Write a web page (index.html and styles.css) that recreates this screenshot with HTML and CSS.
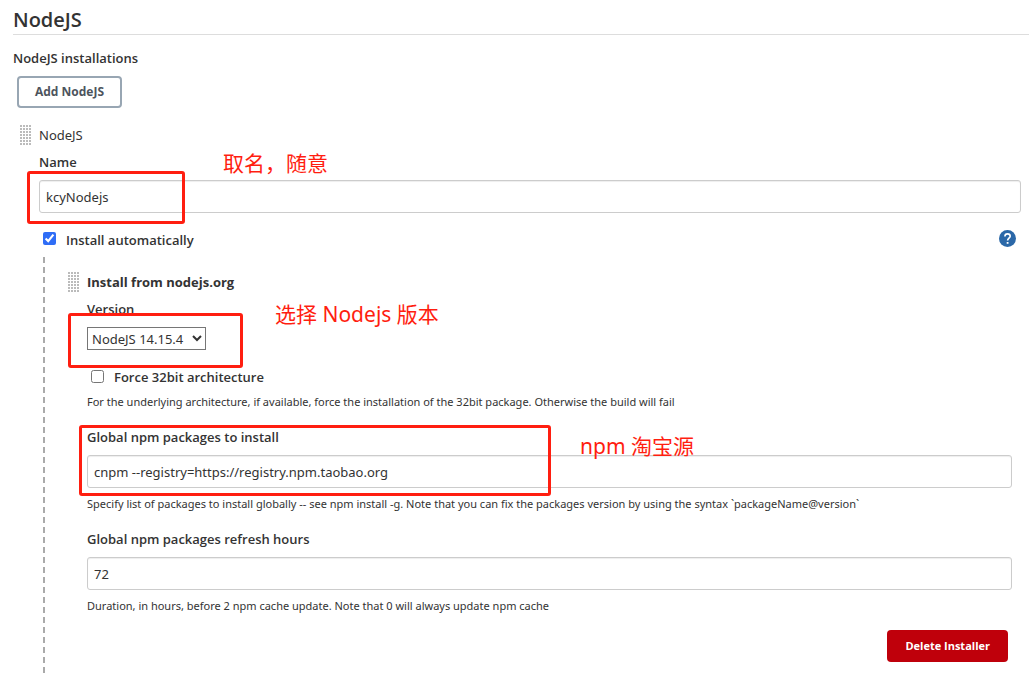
FILE: index.html
```
<!DOCTYPE html>
<html lang="en">
<head>
<meta charset="utf-8">
<title>NodeJS</title>
<link rel="stylesheet" href="styles.css">
</head>
<body>
<main class="page">
  <h1 class="page-title">NodeJS</h1>
  <h2 class="section-title">NodeJS installations</h2>
  <button type="button" class="btn btn-outline">Add NodeJS</button>

  <section class="tool">
    <div class="drag-row">
      <span class="drag-handle"></span>
      <span>NodeJS</span>
    </div>
    <div class="tool-body">
      <div class="field">
        <label class="label" for="name">Name</label>
        <input class="text-input" id="name" type="text" value="kcyNodejs">
        <span class="mark mark-name"></span>
        <span class="note note-name" lang="zh">取名，随意</span>
      </div>
      <div class="check-row">
        <input class="check" id="auto" type="checkbox" checked>
        <label class="label" for="auto">Install automatically</label>
        <button type="button" class="help" aria-label="Help">
          <svg viewBox="0 0 17 17" width="17" height="17" aria-hidden="true">
            <circle cx="8.500" cy="8.500" r="8.500" fill="#2b68a8"/>
            <path d="M5.900 6.500C5.900 4.700 7 3.900 8.500 3.900S11.200 4.800 11.200 6.300C11.200 8.100 8.600 8.400 8.600 10.500" fill="none" stroke="#fff" stroke-width="1.600"/>
            <rect x="7.700" y="12" width="1.800" height="1.800" fill="#fff"/>
          </svg>
        </button>
      </div>
    </div>
  </section>

  <section class="installer">
    <div class="drag-row strong">
      <span class="drag-handle"></span>
      <span>Install from nodejs.org</span>
    </div>
    <div class="installer-body">
      <div class="field field-version">
        <label class="label" for="version">Version</label>
        <select class="select" id="version"><option>NodeJS 14.15.4</option></select>
        <span class="mark mark-version"></span>
        <span class="note note-version" lang="zh">选择 Nodejs 版本</span>
      </div>
      <div class="check-row">
        <input class="check" id="force" type="checkbox">
        <label class="label" for="force">Force 32bit architecture</label>
      </div>
      <p class="hint">For the underlying architecture, if available, force the installation of the 32bit package. Otherwise the build will fail</p>
      <div class="field field-packages">
        <label class="label" for="packages">Global npm packages to install</label>
        <input class="text-input" id="packages" type="text" value="cnpm --registry=https://registry.npm.taobao.org">
        <span class="mark mark-packages"></span>
        <span class="note note-packages" lang="zh">npm 淘宝源</span>
      </div>
      <p class="hint">Specify list of packages to install globally -- see npm install -g. Note that you can fix the packages version by using the syntax `packageName@version`</p>
      <div class="field field-hours">
        <label class="label" for="hours">Global npm packages refresh hours</label>
        <input class="text-input" id="hours" type="text" value="72">
      </div>
      <p class="hint">Duration, in hours, before 2 npm cache update. Note that 0 will always update npm cache</p>
      <div class="actions">
        <button type="button" class="btn btn-danger">Delete Installer</button>
      </div>
    </div>
  </section>
</main>
</body>
</html>
```
FILE: styles.css
```
* {
  box-sizing: border-box;
}

body {
  margin: 0;
  background: #fff;
  color: #333;
  font: 13px/20px "Noto Sans", "Noto Sans CJK SC", sans-serif;
}

.page {
  padding: 6px 3px 0 13px;
}

.page-title,
.section-title,
.label,
.strong {
  font-family: "Open Sans", sans-serif;
  font-weight: 600;
}

.page-title {
  margin: 0;
  border-bottom: 1px solid #ddd;
  font-size: 20px;
  line-height: 28px;
}

.section-title {
  margin: 13px 0 8px;
  font-size: 13px;
  line-height: 20px;
}

.btn {
  height: 32px;
  padding: 0 16px;
  border-radius: 4px;
  font: 700 12px/16px "Open Sans", sans-serif;
  cursor: pointer;
}

.btn-outline {
  display: block;
  margin-left: 4px;
  border: 2px solid #98a6b3;
  background: #fff;
  color: #4d545d;
}

.btn-danger {
  padding: 0 18px;
  border: 0;
  background: #bf000b;
  color: #fff;
  font-size: 11px;
}

.tool {
  margin: 17px 8px 0 7px;
}

.drag-row {
  display: flex;
  align-items: center;
  gap: 8px;
}

.strong {
  font-weight: 700;
}

.drag-handle {
  width: 11px;
  height: 20px;
  background: radial-gradient(circle at 1px 1px, #bbb 1px, transparent 1px) 0 0 / 3px 3px;
}

.tool-body,
.installer-body {
  padding-left: 19px;
}

.field {
  position: relative;
  display: flex;
  flex-direction: column;
  align-items: flex-start;
}

.tool .field {
  padding-top: 7px;
}

.text-input {
  width: 100%;
  height: 33px;
  margin-top: 8px;
  padding: 0 6px;
  border: 1px solid #ccc;
  border-radius: 3px;
  background: #fff;
  box-shadow: inset 0 1px 1px #eee;
  color: #333;
  font: inherit;
}

.check-row {
  display: flex;
  align-items: flex-start;
  gap: 10px;
  padding-left: 4px;
}

.tool .check-row {
  margin-top: 17px;
}

.check {
  width: 13px;
  height: 13px;
  margin: 3px 0 0;
  accent-color: #2f6df6;
}

.tool .check {
  margin-top: 2px;
}

.help {
  display: flex;
  margin: 0 5px 0 auto;
  padding: 0;
  border: 0;
  background: none;
  cursor: pointer;
}

.installer {
  margin: 7px 17px 0 30px;
  padding: 15px 0 15px 25px;
  background: repeating-linear-gradient(#aaa 0 6px, transparent 6px 10px) 0 0 / 2px 100% no-repeat;
}

.field-version {
  margin: 7px 0 17px;
}

.select {
  min-width: 119px;
  height: 23px;
  margin-top: 8px;
  border: 1px solid #767676;
  border-radius: 0;
  background: #fff;
  color: #333;
  font: inherit;
}

.hint {
  margin: 6px 0 0;
  font-size: 11px;
  line-height: 18px;
}

.field-packages {
  margin-top: 16px;
}

.field-packages + .hint,
.field-hours + .hint {
  margin-top: 7px;
}

.field-hours {
  margin-top: 16px;
}

.actions {
  display: flex;
  justify-content: flex-end;
  margin: 15px 4px 0 0;
}

.mark {
  position: absolute;
  border: 3px solid #ff1e10;
  border-radius: 3px;
  pointer-events: none;
}

.mark-name {
  top: 26px;
  left: -12px;
  width: 158px;
  height: 53px;
}

.mark-version {
  top: 14px;
  left: -19px;
  width: 175px;
  height: 55px;
}

.mark-packages {
  top: -2px;
  left: -8px;
  width: 472px;
  height: 71px;
}

.note {
  position: absolute;
  color: #ff1e10;
  font-size: 21px;
  line-height: 28px;
  white-space: nowrap;
}

.note-name {
  top: 4px;
  left: 184px;
}

.note-version {
  top: 1px;
  left: 188px;
}

.note-packages {
  top: 5px;
  left: 493px;
}
```
